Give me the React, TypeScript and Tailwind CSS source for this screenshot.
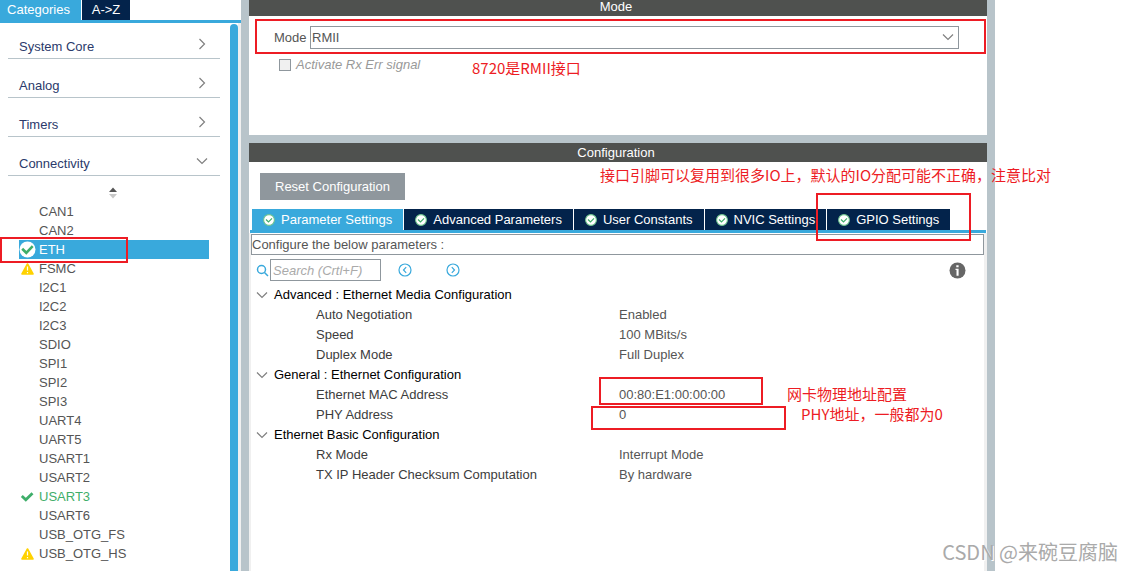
import { useState } from "react";
import type { ReactNode } from "react";

type Status = "ok" | "warning" | "selected";

const categories = [
  { name: "System Core", open: false },
  { name: "Analog", open: false },
  { name: "Timers", open: false },
  { name: "Connectivity", open: true },
];

const peripherals: { name: string; status?: Status }[] = [
  { name: "CAN1" },
  { name: "CAN2" },
  { name: "ETH", status: "selected" },
  { name: "FSMC", status: "warning" },
  { name: "I2C1" },
  { name: "I2C2" },
  { name: "I2C3" },
  { name: "SDIO" },
  { name: "SPI1" },
  { name: "SPI2" },
  { name: "SPI3" },
  { name: "UART4" },
  { name: "UART5" },
  { name: "USART1" },
  { name: "USART2" },
  { name: "USART3", status: "ok" },
  { name: "USART6" },
  { name: "USB_OTG_FS" },
  { name: "USB_OTG_HS", status: "warning" },
];

const tabs = [
  "Parameter Settings",
  "Advanced Parameters",
  "User Constants",
  "NVIC Settings",
  "GPIO Settings",
];

const groups = [
  {
    title: "Advanced : Ethernet Media Configuration",
    rows: [
      ["Auto Negotiation", "Enabled"],
      ["Speed", "100 MBits/s"],
      ["Duplex Mode", "Full Duplex"],
    ],
  },
  {
    title: "General : Ethernet Configuration",
    rows: [
      ["Ethernet MAC Address", "00:80:E1:00:00:00"],
      ["PHY Address", "0"],
    ],
  },
  {
    title: "Ethernet Basic Configuration",
    rows: [
      ["Rx Mode", "Interrupt Mode"],
      ["TX IP Header Checksum Computation", "By hardware"],
    ],
  },
];

function ChevronDown({ className = "" }: { className?: string }) {
  return (
    <svg className={className} width="12" height="12" viewBox="0 0 12 12" fill="none" stroke="#808080" strokeWidth="1.2">
      <path d="M1 3.5 6 8.5 11 3.5" />
    </svg>
  );
}

function ChevronRight({ className = "" }: { className?: string }) {
  return (
    <svg className={className} width="12" height="12" viewBox="0 0 12 12" fill="none" stroke="#808080" strokeWidth="1.2">
      <path d="M3.5 1 8.5 6 3.5 11" />
    </svg>
  );
}

function StatusIcon({ status }: { status?: Status }) {
  if (status === "selected") {
    return (
      <svg width="17" height="17" viewBox="0 0 17 17" fill="none">
        <circle cx="8.5" cy="8.5" r="8" fill="#fff" />
        <path d="M3.2 7.8 7.3 11.8 13.7 5.2" stroke="#3fae6a" strokeWidth="2.6" />
      </svg>
    );
  }
  if (status === "ok") {
    return (
      <svg width="17" height="17" viewBox="0 0 17 17" fill="none">
        <path d="M2.8 8 6.8 11.8 13.5 5.2" stroke="#3fae6a" strokeWidth="2.8" />
      </svg>
    );
  }
  if (status === "warning") {
    return (
      <svg width="17" height="17" viewBox="0 0 17 17">
        <path d="M8.5 4 14 14H3Z" fill="#ffd200" stroke="#ffd200" strokeWidth="1.6" strokeLinejoin="round" />
        <path d="M8.5 6.5v4M8.5 12v1.3" stroke="#fff" strokeWidth="1.2" />
      </svg>
    );
  }
  return null;
}

function TabCheck() {
  return (
    <svg width="12" height="12" viewBox="0 0 12 12" fill="none">
      <circle cx="6" cy="6" r="5.4" fill="#fff" stroke="#6fc48f" strokeWidth="1.1" />
      <path d="M3 5.5 5.5 8 9 4.4" stroke="#3fae6a" strokeWidth="1.2" />
    </svg>
  );
}

function Highlight({ className }: { className: string }) {
  return <div className={`pointer-events-none absolute z-10 border-2 border-[#ed1c24] ${className}`} />;
}

function Note({ className, children }: { className: string; children: ReactNode }) {
  return (
    <p
      className={`pointer-events-none absolute z-10 whitespace-nowrap font-['Noto_Sans_CJK_SC',sans-serif] text-[15px] leading-5 text-[#ed1c24] ${className}`}
    >
      {children}
    </p>
  );
}

function Sidebar() {
  const [selected, setSelected] = useState("ETH");

  return (
    <aside className="relative flex w-[241px] shrink-0 flex-col">
      <div className="flex h-[23px] gap-px border-b-3 border-[#39a9dc]">
        <button className="w-[81px] bg-[#39a9dc] pr-1 leading-5 text-white">Categories</button>
        <button className="w-12 bg-[#03234b] leading-5 text-white">A-&gt;Z</button>
      </div>
      <div className="flex flex-1">
        <div className="flex-1">
          <div className="flex flex-col gap-[3px] pr-[10px] pl-2">
            {categories.map((c) => (
              <button
                key={c.name}
                className="flex h-9 items-end justify-between border-b border-[#b8c4ca] pr-3 pb-px pl-[11px] text-left leading-5 text-[#2b3a6b]"
              >
                {c.name}
                {c.open ? <ChevronDown className="mb-[7px]" /> : <ChevronRight className="mb-[7px]" />}
              </button>
            ))}
          </div>
          <div className="flex h-[26px] items-end justify-center pr-1 pb-[3px]">
            <svg width="10" height="12" viewBox="0 0 10 12">
              <path d="M5 0.5 9 5H1Z" fill="#555" />
              <path d="M1 7H9L5 11.5Z" fill="#c8c8c8" />
            </svg>
          </div>
          <ul className="mr-[21px] ml-[19px]">
            {peripherals.map((p) => (
              <li key={p.name}>
                <button
                  onClick={() => setSelected(p.name)}
                  className={`flex h-[19px] w-full items-center gap-[3px] text-left ${
                    p.name === selected ? "bg-[#39a9dc] text-white" : p.status === "ok" ? "text-[#3fae6a]" : "text-[#555]"
                  }`}
                >
                  <span className="w-[17px]">
                    <StatusIcon status={p.status} />
                  </span>
                  {p.name}
                </button>
              </li>
            ))}
          </ul>
        </div>
        <div className="mt-px w-2 rounded-t bg-[#39a9dc]" />
        <div className="w-[3px] bg-[#f0f0f0]" />
      </div>
      <Highlight className="top-[237px] left-0 h-[26px] w-32" />
    </aside>
  );
}

function ModePanel() {
  return (
    <section className="relative h-[135px] bg-white">
      <h2 className="h-4 bg-[#4f514f] pr-1 text-center leading-[13px] text-white">Mode</h2>
      <div className="mt-[10px] mr-7 ml-[25px] flex h-[23px] items-center text-[#555]">
        <label htmlFor="mode" className="w-9">
          Mode
        </label>
        <div className="relative h-full flex-1">
          <select id="mode" className="h-full w-full appearance-none border border-[#8f979d] bg-white px-px">
            <option>RMII</option>
            <option>MII</option>
            <option>Disable</option>
          </select>
          <ChevronDown className="pointer-events-none absolute top-[5px] right-[5px]" />
        </div>
      </div>
      <label className="mt-[6px] ml-[30px] flex h-5 items-center gap-[5px] italic text-[#999]">
        <input type="checkbox" disabled className="size-3 appearance-none border border-[#8f979d] bg-[#f0f0f0]" />
        Activate Rx Err signal
      </label>
      <Highlight className="top-[19px] right-px left-[6px] h-[35px]" />
      <Note className="top-[58px] left-[223px]">8720是RMII接口</Note>
    </section>
  );
}

function ParameterTable() {
  return (
    <table className="w-full table-fixed border-collapse text-left">
      <colgroup>
        <col className="w-[368px]" />
        <col />
      </colgroup>
      {groups.map((g) => (
        <tbody key={g.title}>
          <tr className="h-5">
            <th colSpan={2} className="p-0 font-normal text-black">
              <button className="flex h-5 items-center gap-[6px] pl-[5px]">
                <ChevronDown />
                {g.title}
              </button>
            </th>
          </tr>
          {g.rows.map(([name, value]) => (
            <tr key={name} className="h-5">
              <th className="p-0 pl-[65px] font-normal text-[#3c3c3c]">{name}</th>
              <td className="p-0 text-[#555]">{value}</td>
            </tr>
          ))}
        </tbody>
      ))}
    </table>
  );
}

function ConfigurationPanel() {
  const [active, setActive] = useState(tabs[0]);

  return (
    <section className="flex flex-1 flex-col bg-white">
      <h2 className="h-[19px] bg-[#4f514f] pr-1 text-center leading-[19px] text-white">Configuration</h2>
      <div className="px-[11px] pt-[11px] pb-[9px]">
        <button className="block h-[27px] bg-[#8f979d] px-[15px] text-white">Reset Configuration</button>
      </div>
      <div className="mr-px ml-px flex gap-px border-b-3 border-[#39a9dc] pl-[2px]">
        {tabs.map((tab) => (
          <button
            key={tab}
            onClick={() => setActive(tab)}
            className={`flex h-[21px] items-center gap-[6px] px-[11px] whitespace-nowrap text-white ${
              tab === active ? "bg-[#39a9dc]" : "bg-[#03234b]"
            }`}
          >
            <TabCheck />
            {tab}
          </button>
        ))}
      </div>
      <div className="flex-1 border-r-3 border-l-2 border-[#f0f0f0] pt-px">
        <p className="h-[21px] border border-[#8f979d] leading-[19px] text-[#555]">Configure the below parameters :</p>
        <div className="my-1 flex h-[22px] items-center pr-[18px] pl-[5px]">
          <svg width="14" height="14" viewBox="0 0 14 14" fill="none" stroke="#39a9dc" strokeWidth="1.5">
            <circle cx="5.5" cy="6.5" r="4" />
            <path d="M8.5 9.5 12 13" />
          </svg>
          <input
            aria-label="Search parameters"
            placeholder="Search (Crtl+F)"
            className="h-full w-[111px] border border-[#8f979d] px-[2px] italic placeholder:text-[#aaa]"
          />
          <button aria-label="Previous match" className="ml-[17px]">
            <svg width="14" height="14" viewBox="0 0 14 14" fill="none" stroke="#39a9dc" strokeWidth="1.2">
              <circle cx="7" cy="7" r="6" />
              <path d="M8.2 4.2 5.5 7 8.2 9.8" />
            </svg>
          </button>
          <button aria-label="Next match" className="ml-[34px]">
            <svg width="14" height="14" viewBox="0 0 14 14" fill="none" stroke="#39a9dc" strokeWidth="1.2">
              <circle cx="7" cy="7" r="6" />
              <path d="M5.8 4.2 8.5 7 5.8 9.8" />
            </svg>
          </button>
          <button aria-label="Information" className="ml-auto">
            <svg width="17" height="17" viewBox="0 0 17 17">
              <circle cx="8.5" cy="8.5" r="8" fill="#666" />
              <path d="M7.3 3.2h2.3v2H7.3zM6.5 6.7h3.1v7H7.5v-5.8h-1z" fill="#fff" />
            </svg>
          </button>
        </div>
        <ParameterTable />
      </div>
    </section>
  );
}

export default function App() {
  return (
    <div className="relative flex min-h-screen overflow-hidden bg-white font-['Liberation_Sans',Arial,sans-serif] text-[13px]">
      <Sidebar />
      <main className="relative flex flex-1 flex-col gap-2 border-x-8 border-[#b8c4ca] bg-[#b8c4ca]">
        <ModePanel />
        <ConfigurationPanel />
        <Highlight className="top-[193px] left-[567px] h-12 w-[155px]" />
        <Highlight className="top-[377px] left-[350px] h-7 w-[164px]" />
        <Highlight className="top-[406px] left-[342px] h-6 w-[195px]" />
        <Note className="top-[165px] left-[351px]">接口引脚可以复用到很多IO上，默认的IO分配可能不正确，注意比对</Note>
        <Note className="top-[384px] left-[538px]">网卡物理地址配置</Note>
        <Note className="top-[404px] left-[552px]">PHY地址，一般都为0</Note>
      </main>
      <div className="w-[137px] shrink-0" />
      <p className="absolute right-[14px] bottom-[5px] z-20 font-['Noto_Sans_CJK_SC',sans-serif] text-[20px] leading-7 whitespace-nowrap text-[#aaa] [text-shadow:1px_1px_0_#fff]">
        CSDN @来碗豆腐脑
      </p>
    </div>
  );
}
